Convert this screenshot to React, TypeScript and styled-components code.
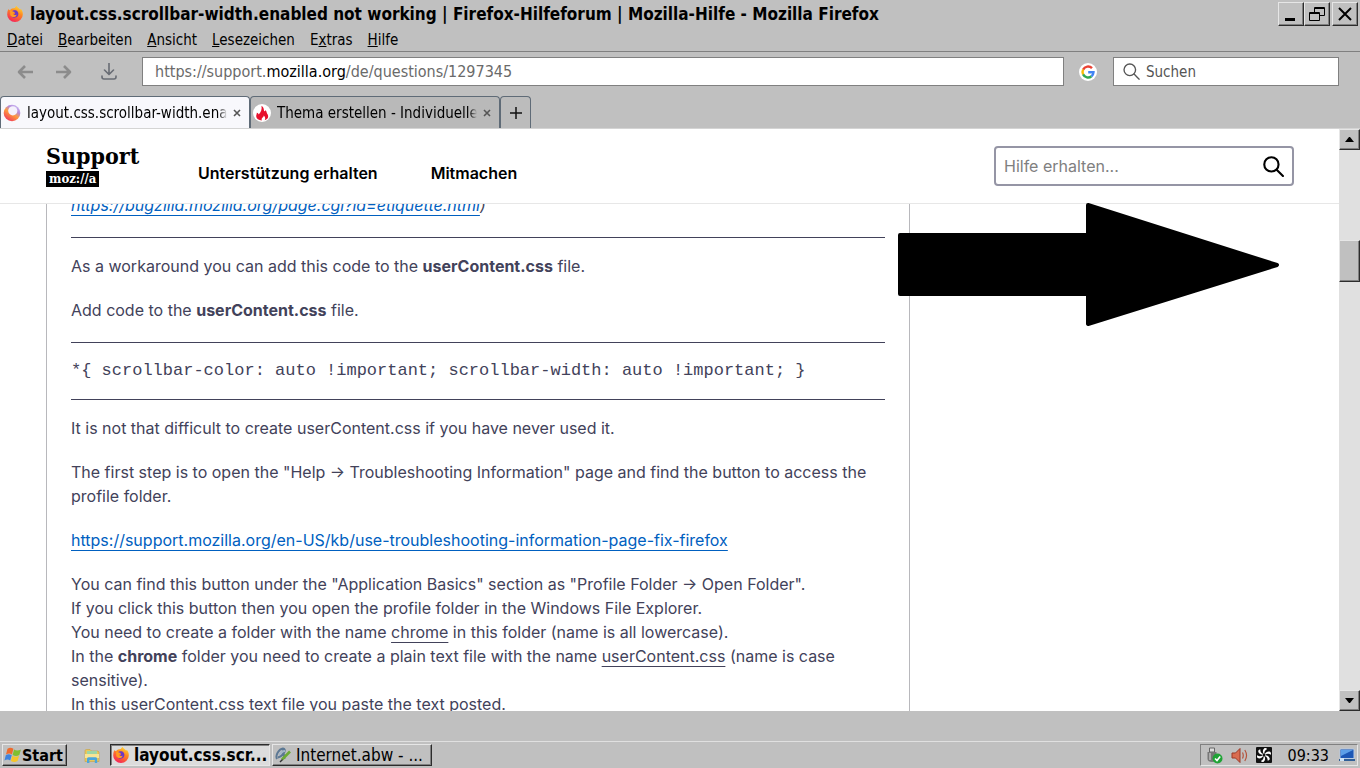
import React from "react";
import styled, { createGlobalStyle, css } from "styled-components";

const ui = `"DejaVu Sans Condensed", "DejaVu Sans", sans-serif`;
const slab = `"DejaVu Serif Condensed", "DejaVu Serif", serif`;
const gray = "#c0c0c0";

const raised = css`
  background: ${gray};
  border: 1px solid;
  border-color: #e6e6e6 #2c2c2c #2c2c2c #e6e6e6;
  box-shadow: inset -1px -1px 0 #808080;
`;

const GlobalStyle = createGlobalStyle`
  * { box-sizing: border-box; }
  body { margin: 0; background: ${gray}; font-family: ${ui}; color: #000; }
  button { padding: 0; font: inherit; color: inherit; }
`;

const Desktop = styled.div`
  display: flex;
  flex-direction: column;
  height: 100vh;
  overflow: hidden;
  background: ${gray};
`;

const TitleBar = styled.header`
  display: flex;
  align-items: center;
  height: 28px;
  padding: 0 2px 0 7px;
  gap: 7px;
`;

const WindowTitle = styled.h1`
  flex: 1;
  margin: 0;
  font-size: 17px;
  line-height: 20px;
  white-space: nowrap;
  overflow: hidden;
`;

const WindowButtons = styled.div`
  display: flex;
  button:last-child { margin-left: 2px; }
`;

const WindowButton = styled.button`
  ${raised}
  display: flex;
  width: 26px;
  height: 24px;
  align-items: center;
  justify-content: center;
`;

const MenuBar = styled.nav`
  display: flex;
  height: 24px;
  padding: 0 7px;
  gap: 15px;
  align-items: center;
  border-bottom: 1px solid #808080;
`;

const MenuButton = styled.button`
  border: 0;
  background: none;
  font-size: 15px;
  line-height: 20px;
`;

const Toolbar = styled.div`
  display: flex;
  align-items: center;
  height: 39px;
  padding: 0 21px 0 16px;
`;

const NavButtons = styled.div`
  display: flex;
  gap: 21px;
  width: 126px;
`;

const PlainButton = styled.button`
  display: flex;
  border: 0;
  background: none;
`;

const AddressBar = styled.div`
  display: flex;
  flex: 1;
  height: 29px;
  align-items: center;
  padding: 0 12px;
  border: 1px solid #808080;
  background: #fff;
  color: #6a6a6a;
  font-size: 16px;
  outline: 0;
  b { font-weight: 400; color: #000; }
`;

const EngineButton = styled(PlainButton)`
  margin: 0 16px 0 15px;
`;

const SearchBox = styled.label`
  display: flex;
  align-items: center;
  width: 226px;
  height: 29px;
  gap: 6px;
  padding: 0 9px;
  border: 1px solid #808080;
  background: #fff;
  svg { flex: none; }
`;

const SearchInput = styled.input`
  flex: 1;
  min-width: 0;
  padding: 0;
  border: 0;
  outline: 0;
  background: none;
  font: 15px ${ui};
  &::placeholder { color: #555; opacity: 1; }
`;

const TabStrip = styled.div`
  display: flex;
  height: 38px;
  padding-top: 5px;
  border-bottom: 1px solid #d4d4d4;
`;

const Tab = styled.div<{ $active?: boolean }>`
  display: flex;
  align-items: center;
  width: 250px;
  padding: 0 8px 0 2px;
  gap: 6px;
  border: 1px solid #5f6b77;
  border-bottom: 0;
  border-radius: 4px 4px 0 0;
  background: ${(p) => (p.$active ? "#f8f8fc" : "#b9b9b9")};
`;

const TabLabel = styled.button`
  flex: 1;
  min-width: 0;
  overflow: hidden;
  border: 0;
  background: none;
  font-size: 15px;
  line-height: 20px;
  text-align: left;
  white-space: nowrap;
  mask-image: linear-gradient(to left, transparent, #000 8px);
`;

const NewTab = styled.button`
  display: flex;
  width: 31px;
  align-items: center;
  justify-content: center;
  border: 1px solid #5f6b77;
  border-bottom: 0;
  border-radius: 4px 4px 0 0;
  background: #bcbcbc;
`;

const Viewport = styled.div`
  display: flex;
  flex: 1;
  min-height: 0;
  position: relative;
  overflow: hidden;
  background: #fff;
`;

const Page = styled.div`
  display: flex;
  flex: 1;
  min-width: 0;
  flex-direction: column;
  overflow: hidden;
  font-family: Inter, sans-serif;
`;

const SiteHeader = styled.header`
  display: flex;
  flex: none;
  position: relative;
  z-index: 1;
  height: 75px;
  padding: 0 45px 0 46px;
  border-bottom: 1px solid #e7e7e7;
  background: #fff;
`;

const Logo = styled.a`
  display: flex;
  flex-direction: column;
  align-items: flex-start;
  width: 152px;
  padding-top: 12px;
  color: #000;
  text-decoration: none;
`;

const LogoName = styled.span`
  font: 700 23px/30px ${slab};
`;

const LogoMark = styled.span`
  padding: 0 3px;
  background: #000;
  color: #fff;
  font: 700 13px/16px ${slab};
`;

const SiteNav = styled.nav`
  display: flex;
  flex: 1;
  gap: 53px;
  padding-top: 32px;
  a {
    color: #000;
    font-size: 16px;
    font-weight: 600;
    line-height: 24px;
    text-decoration: none;
  }
`;

const HelpSearch = styled.form`
  display: flex;
  align-items: center;
  width: 300px;
  height: 40px;
  margin-top: 17px;
  padding: 0 8px;
  border: 2px solid #9595a5;
  border-radius: 4px;
  input {
    flex: 1;
    min-width: 0;
    padding: 0;
    border: 0;
    outline: 0;
    font: 16px Inter, sans-serif;
  }
  input::placeholder { color: #808080; opacity: 1; }
`;

const Article = styled.article`
  flex: none;
  width: 864px;
  max-width: 100%;
  margin: -11px 0 0 46px;
  padding: 0 24px;
  border: solid #b8b8bc;
  border-width: 0 1px;
  color: #42425a;
  font-size: 16px;
  line-height: 24px;
  p { margin: 0 0 20px; }
  a { color: #0060c0; }
  a, u { text-underline-offset: 4px; text-decoration-thickness: 1px; }
  hr {
    height: 1px;
    margin: 0 0 16px;
    border: 0;
    background: #42425a;
  }
`;

const Code = styled.p`
  padding-top: 4px;
  font: 17px/16px "Liberation Mono", monospace;
`;

const Arrow = styled.svg`
  position: absolute;
  z-index: 2;
  top: 74px;
  right: 80px;
`;

const ScrollTrack = styled.div`
  display: flex;
  flex: none;
  flex-direction: column;
  width: 21px;
  background: #e0e0e0;
`;

const ScrollButton = styled.button`
  ${raised}
  display: flex;
  height: 21px;
  align-items: center;
  justify-content: center;
`;

const ScrollThumb = styled.div`
  ${raised}
  height: 42px;
  margin: 90px 0 auto;
`;

const Taskbar = styled.footer`
  display: flex;
  height: 27px;
  margin-top: 30px;
  padding: 2px;
  align-items: stretch;
  border-top: 1px solid #e0e0e0;
  font-size: 16px;
`;

const StartButton = styled.button`
  ${raised}
  display: flex;
  width: 65px;
  height: 22px;
  align-items: center;
  padding-left: 1px;
  font-weight: 700;
`;

const QuickLaunch = styled(PlainButton)`
  align-items: center;
  height: 24px;
  margin: 0 10px 0 17px;
`;

const TaskButton = styled.button<{ $pressed?: boolean }>`
  ${raised}
  display: flex;
  width: 160px;
  height: 22px;
  margin-right: 2px;
  padding: 0 2px;
  gap: 5px;
  align-items: center;
  font-size: 17px;
  line-height: 20px;
  white-space: nowrap;
  overflow: hidden;
  svg { flex: none; }
  ${(p) =>
    p.$pressed &&
    css`
      background: #dcdcdc;
      border-color: #2c2c2c #e6e6e6 #e6e6e6 #2c2c2c;
      box-shadow: inset 1px 1px 0 #808080;
      font-weight: 700;
    `}
`;

const Tray = styled.div`
  display: flex;
  height: 22px;
  margin-left: auto;
  padding: 0 2px 0 5px;
  gap: 8px;
  align-items: center;
  border: 1px solid;
  border-color: #808080 #e6e6e6 #e6e6e6 #808080;
  time { margin: 0 2px 0 8px; }
`;

const Firefox = ({ id }: { id: string }) => (
  <svg width="16" height="16" viewBox="0 0 16 16">
    <defs>
      <linearGradient id={id} x1="0.8" y1="0" x2="0.3" y2="1">
        <stop offset="0" stopColor="#ffe03a" />
        <stop offset="0.4" stopColor="#ff8a1f" />
        <stop offset="1" stopColor="#f5205a" />
      </linearGradient>
    </defs>
    <path d="M1.2 3.2 3 4.2C4 2.8 6 2 8 2.1 8.200 1 9 .3 9.800 0c.4 1.600 2.200 2.200 3.200 3.400.6.2.8 0 .7-.6C15.300 4.500 16 6.500 15.800 8.500A7.800 7.500 0 0 1 .2 8.500C.2 6.500.5 4.800 1.200 3.200Z" fill={`url(#${id})`} />
    <path d="M5 5.500c1.200-1.600 4.300-1.700 5.700.2 1.600 2.300.2 5.500-2.500 5.900C5.800 12 4 10.400 4 8.500l2.200.5 1.800-1-.3-1.300-1.700-.1Z" fill="#6b38c6" />
    <path d="M3 4.200c1 .1 1.800.4 2.200 1.100L7.800 6c-.2 1-1.800 1.300-1.800 1.800.4 1.400 2.600 1.700 3.700.6C9.400 11.500 4.500 12 3.300 8.900Z" fill="#ff9b22" />
  </svg>
);

const Spinner = () => (
  <svg width="18" height="18" viewBox="0 0 18 18">
    <defs>
      <linearGradient id="ring" x1="0.9" y1="0.1" x2="0.3" y2="1">
        <stop offset="0" stopColor="#c9b8f5" />
        <stop offset="0.3" stopColor="#b58ad8" />
        <stop offset="0.55" stopColor="#ff9a3c" />
        <stop offset="1" stopColor="#f0395c" />
      </linearGradient>
    </defs>
    <circle cx="9" cy="9" r="8.300" fill="url(#ring)" />
    <circle cx="9.800" cy="6.800" r="4.600" fill="#f4f1fc" />
  </svg>
);

const Flame = () => (
  <svg width="18" height="18" viewBox="0 0 18 18">
    <circle cx="9" cy="9" r="9" fill="#fff" />
    <path d="M8.500 1.800c2.600 1.800 2.200 3.700 2.600 5.200.6.5 1.400-.1 1.400-1 1.500 1.800 1 3.200 2.200 4.500 1.200 2.500 0 4.700-3 5.800 1-1.800.5-3.700-1-4.800.2 1.700-1.400 1.700-1.900 3-.3.800-.2 1.300.1 2C5.600 16.300 3.300 15 3.200 12.300c0-1.600.7-2.100.6-3.600 1.300.4 1.800 1.100 1.900 1.900C8.300 8.200 9 5 8.500 1.800Z" fill="#e8102c" />
  </svg>
);

const ArrowIcon = ({ flip }: { flip?: boolean }) => (
  <svg width="18" height="18" viewBox="0 0 18 18" fill="none" stroke="#8c8c8c" strokeWidth="2.600" strokeLinejoin="round">
    {flip ? <path d="M1 9h14M9 3l6 6-6 6" /> : <path d="M17 9H3M9 3 3 9l6 6" />}
  </svg>
);

const Lens = ({ size, color, width }: { size: number; color: string; width: number }) => (
  <svg width={size} height={size} viewBox="0 0 20 20" fill="none" stroke={color} strokeWidth={width} strokeLinecap="round">
    <circle cx="8" cy="8" r="6.800" />
    <path d="m13 13 6 6" />
  </svg>
);

const Close = () => (
  <svg width="8" height="8" viewBox="0 0 8 8" stroke="#555" strokeWidth="1.600">
    <path d="m1 1 6 6M7 1 1 7" />
  </svg>
);

const Google = () => (
  <svg width="18" height="18" viewBox="0 0 18 18" fill="none" strokeWidth="2.400">
    <circle cx="9" cy="9" r="9" fill="#fff" />
    <path d="M13 5.200A5.500 5.500 0 0 0 4.100 6.600" stroke="#ea4335" />
    <path d="M4.100 6.600a5.500 5.500 0 0 0 0 4.800" stroke="#fbbc05" />
    <path d="M4.100 11.400a5.500 5.500 0 0 0 8.400 1.800" stroke="#34a853" />
    <path d="M12.500 13.200A5.500 5.500 0 0 0 14.500 9.200H9.200" stroke="#4285f4" />
  </svg>
);

const WindowsFlag = () => (
  <svg width="18" height="18" viewBox="0 0 17 16">
    <path d="M3.300 2.200c2-1.500 3.800-1.300 5.600 0L7.500 7.500c-1.800-1.300-3.500-1.200-5.600 0Z" fill="#ee6a2c" />
    <path d="M9.500 2.700c2 1.300 4 1.200 6.500 0l-1.500 5.200c-2.200 1.300-4.300 1.200-6.400 0Z" fill="#7fbf2f" />
    <path d="M1.700 8.200c2-1.300 3.700-1.300 5.600 0l-1.400 5c-1.800-1.200-3.500-1.100-5.500 0Z" fill="#3f83dc" />
    <path d="M7.900 8.700c2 1.300 4.100 1.200 6.300 0l-1.400 5c-2.200 1.300-4.300 1.200-6.300 0Z" fill="#f6c528" />
  </svg>
);

const Folder = () => (
  <svg width="16" height="16" viewBox="0 0 16 16">
    <path d="M1 3c0-1 .5-1.500 1.500-1.500H6L7.500 3H14l1 1v9.500H1Z" fill="#e9c95b" stroke="#c5a043" strokeWidth="0.600" />
    <path d="M3 3h10v4H3Z" fill="#9fd6a5" />
    <path d="M1 6h14v4H1Z" fill="#f8e595" />
    <path d="M3 15v-4c0-1 .6-1.700 1.600-1.700h7c1 0 1.600.7 1.600 1.700v4h-2.400v-3H5.400v3Z" fill="#4ba6dc" />
  </svg>
);

const AbiWord = () => (
  <svg width="16" height="16" viewBox="0 0 16 16" fill="none">
    <path d="M2 12C0 8 4 2 8 1.500c3.500 0 1.500 7-5 9M8 1.500 9.500 12" stroke="#5c7894" strokeWidth="2" />
    <path d="M4 8c2-3 4-4 6-4" stroke="#a4b6c8" strokeWidth="1.800" />
    <path d="m7 12.500 8-8" stroke="#6dab35" strokeWidth="2.600" />
    <path d="m5 15 2.500-2.500" stroke="#333" strokeWidth="1.500" />
  </svg>
);

const UsbIcon = () => (
  <svg width="17" height="17" viewBox="0 0 17 17">
    <path d="M3.500 1h5v4h-5Z" fill="#ddd" stroke="#666" />
    <path d="M1.500 5h9v7c0 2-2 3-4.500 3s-4.500-1-4.500-3Z" fill="#777" />
    <path d="M3 6h2v7H3Z" fill="#aaa" />
    <circle cx="11.500" cy="11.500" r="5" fill="#20a336" />
    <path d="m9 11.500 2 2 3.200-4" fill="none" stroke="#fff" strokeWidth="1.600" />
  </svg>
);

const Speaker = () => (
  <svg width="17" height="17" viewBox="0 0 17 17" fill="none">
    <path d="M1 6h3.500L9 1.500v14L4.500 11H1Z" fill="#d96c50" stroke="#9c3827" />
    <path d="M11.500 5.500c1 2 1 4 0 6M13.800 3c2.200 3.500 2.200 7.500 0 11" stroke="#b5543d" strokeWidth="1.200" />
  </svg>
);

const Fan = () => (
  <svg width="16" height="16" viewBox="0 0 16 16">
    <rect width="16" height="16" rx="1" fill="#111" />
    <g fill="#fff">
      {[0, 60, 120, 180, 240, 300].map((a) => (
        <path key={a} d="M7.600 6.800C6.400 4.800 6.600 2.500 8.600.9c1.200 0 2 .4 2.600 1C9 3 8.200 4.600 8.400 6.800Z" transform={`rotate(${a} 8 8)`} />
      ))}
    </g>
  </svg>
);

const Monitor = () => (
  <svg width="16" height="14" viewBox="0 0 16 14">
    <path d="M1 1h14v9.500H1Z" fill="#1c57b5" stroke="#b8cbe2" />
    <path d="M2 2h12L2 8Z" fill="#5c9fe8" />
    <path d="M0 11h16v2H0Z" fill="#315f97" />
    <path d="M1 10h4v3H1Z" fill="#cfe4f6" />
  </svg>
);

const menus: [string, string, string][] = [
  ["", "D", "atei"],
  ["", "B", "earbeiten"],
  ["", "A", "nsicht"],
  ["", "L", "esezeichen"],
  ["E", "x", "tras"],
  ["", "H", "ilfe"],
];

export default function App() {
  return (
    <Desktop>
      <GlobalStyle />
      <TitleBar>
        <Firefox id="fox-title" />
        <WindowTitle>layout.css.scrollbar-width.enabled not working | Firefox-Hilfeforum | Mozilla-Hilfe - Mozilla Firefox</WindowTitle>
        <WindowButtons>
          <WindowButton aria-label="Minimieren">
            <svg width="16" height="16"><path d="M2 12h10v3H2z" /></svg>
          </WindowButton>
          <WindowButton aria-label="Wiederherstellen">
            <svg width="16" height="16" fill="none" stroke="#000">
              <path d="M5.500 6V1.500h10v8H11M5 2.500h11M1 7.500h10M.5 6.500h10v8H.5Z" />
            </svg>
          </WindowButton>
          <WindowButton aria-label="Schließen">
            <svg width="16" height="16" stroke="#000" strokeWidth="2"><path d="m2 2 12 12M14 2 2 14" /></svg>
          </WindowButton>
        </WindowButtons>
      </TitleBar>
      <MenuBar>
        {menus.map(([before, key, after]) => (
          <MenuButton key={key}>{before}<u>{key}</u>{after}</MenuButton>
        ))}
      </MenuBar>
      <Toolbar>
        <NavButtons>
          <PlainButton aria-label="Zurück"><ArrowIcon /></PlainButton>
          <PlainButton aria-label="Vor"><ArrowIcon flip /></PlainButton>
          <PlainButton aria-label="Downloads">
            <svg width="28" height="18" viewBox="0 0 28 18" fill="none" stroke="#686c74" strokeWidth="1.600" strokeLinecap="round" strokeLinejoin="round">
              <path d="M15 0v11M10.500 7l4.500 4.500L19.500 7M8 13v1q0 2 2 2h10q2 0 2-2v-1" />
            </svg>
          </PlainButton>
        </NavButtons>
        <AddressBar role="textbox" aria-label="Adresse" tabIndex={0}>
          <span>https://support.<b>mozilla.org</b>/de/questions/1297345</span>
        </AddressBar>
        <EngineButton aria-label="Google"><Google /></EngineButton>
        <SearchBox>
          <Lens size={17} color="#555" width={1.6} />
          <SearchInput placeholder="Suchen" aria-label="Suchen" />
        </SearchBox>
      </Toolbar>
      <TabStrip>
        <Tab $active>
          <Spinner />
          <TabLabel>layout.css.scrollbar-width.enabled not working</TabLabel>
          <PlainButton aria-label="Tab schließen"><Close /></PlainButton>
        </Tab>
        <Tab>
          <Flame />
          <TabLabel>Thema erstellen - Individuelle</TabLabel>
          <PlainButton aria-label="Tab schließen"><Close /></PlainButton>
        </Tab>
        <NewTab aria-label="Neuer Tab">
          <svg width="12" height="12" stroke="#111" strokeWidth="1.500"><path d="M6 0v12M0 6h12" /></svg>
        </NewTab>
      </TabStrip>
      <Viewport>
        <Page>
          <SiteHeader>
            <Logo href="#">
              <LogoName>Support</LogoName>
              <LogoMark>moz://a</LogoMark>
            </Logo>
            <SiteNav>
              <a href="#">Unterstützung erhalten</a>
              <a href="#">Mitmachen</a>
            </SiteNav>
            <HelpSearch>
              <input placeholder="Hilfe erhalten..." aria-label="Hilfe erhalten" />
              <PlainButton type="button" aria-label="Suchen"><Lens size={21} color="#000" width={2} /></PlainButton>
            </HelpSearch>
          </SiteHeader>
          <Article>
            <p><em><a href="#">https://bugzilla.mozilla.org/page.cgi?id=etiquette.html</a>)</em></p>
            <hr />
            <p>As a workaround you can add this code to the <b>userContent.css</b> file.</p>
            <p>Add code to the <b>userContent.css</b> file.</p>
            <hr />
            <Code>{"*{ scrollbar-color: auto !important; scrollbar-width: auto !important; }"}</Code>
            <hr />
            <p>It is not that difficult to create userContent.css if you have never used it.</p>
            <p>The first step is to open the "Help → Troubleshooting Information" page and find the button to access the profile folder.</p>
            <p><a href="#">https://support.mozilla.org/en-US/kb/use-troubleshooting-information-page-fix-firefox</a></p>
            <p>
              You can find this button under the "Application Basics" section as "Profile Folder → Open Folder".<br />
              If you click this button then you open the profile folder in the Windows File Explorer.<br />
              You need to create a folder with the name <u>chrome</u> in this folder (name is all lowercase).<br />
              In the <b>chrome</b> folder you need to create a plain text file with the name <u>userContent.css</u> (name is case sensitive).<br />
              In this userContent.css text file you paste the text posted.
            </p>
          </Article>
        </Page>
        <Arrow width="382" height="124" viewBox="0 0 382 124" stroke="#000" strokeWidth="4" strokeLinejoin="round">
          <path d="M2 32h188V2l189 60L190 121V91H2Z" />
        </Arrow>
        <ScrollTrack>
          <ScrollButton aria-label="Nach oben"><svg width="9" height="5"><path d="M4 0h1l4 5H0Z" /></svg></ScrollButton>
          <ScrollThumb />
          <ScrollButton aria-label="Nach unten"><svg width="9" height="5"><path d="M0 0h9L5 5H4Z" /></svg></ScrollButton>
        </ScrollTrack>
      </Viewport>
      <Taskbar>
        <StartButton><WindowsFlag />Start</StartButton>
        <QuickLaunch aria-label="Dateien"><Folder /></QuickLaunch>
        <TaskButton $pressed><Firefox id="fox-task" />layout.css.scr...</TaskButton>
        <TaskButton><AbiWord />Internet.abw - ...</TaskButton>
        <Tray>
          <UsbIcon /><Speaker /><Fan />
          <time>09:33</time>
          <Monitor />
        </Tray>
      </Taskbar>
    </Desktop>
  );
}
